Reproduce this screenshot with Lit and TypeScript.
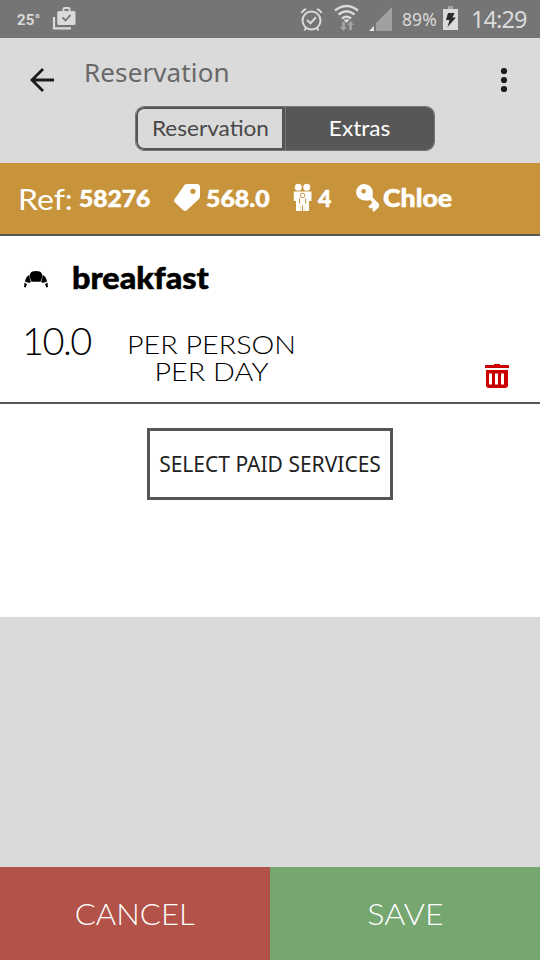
import { LitElement, html, css } from "lit";
import { customElement } from "lit/decorators.js";

@customElement("status-bar")
class StatusBar extends LitElement {
  static styles = css`
    :host { display: flex; height: 38px; background: #757575; color: #dadada; font-family: "Noto Sans", sans-serif; position: relative; white-space: nowrap; }
    svg { display: block; width: 540px; height: 38px; position: absolute; inset: 0; }
    .temp { margin-left: 17px; width: 368px; font: 700 15px/38px Roboto, sans-serif; letter-spacing: 0.2px; padding-top: 1px; box-sizing: border-box; }
    .charge { margin-left: 17px; width: 69px; font-size: 17.5px; line-height: 39px; letter-spacing: 0.1px; }
    .time { font-size: 23.5px; line-height: 38px; letter-spacing: -0.9px; }
  `;
  render() {
    return html`
      <span class="temp">25°</span><span class="charge">89%</span><span class="time">14:29</span>
      <svg viewBox="0 0 540 38">
        <path d="M54 17v11.300H71" fill="none" stroke="#dadada" stroke-width="2.200"/>
        <path d="M59 11h3.500V9q0-2 2-2h4q2 0 2 2v2H74q1.500 0 1.500 1.500v11Q75.500 25 74 25H59q-1.700 0-1.700-1.500v-11Q57.300 11 59 11zm5.500 0h4V9h-4z" fill="#dadada" fill-rule="evenodd"/>
        <path d="M62.500 17.500l3 3 5-5.500" fill="none" stroke="#757575" stroke-width="1.800"/>
        <g fill="none" stroke="#dadada" stroke-width="2">
          <circle cx="311.500" cy="20.500" r="9"/>
          <path d="M307 20l3.500 3.300 5.500-6M301.500 13q1.500-3 4.500-4M317 9q3 1 4.500 4M306 28l-1.500 2.500M317 28l1.500 2.500"/>
          <path d="M335 10.500q11.500-9 23 0M338.500 14.500q8-6.500 16 0M342 18.500q4.500-3.500 9 0" stroke-width="2.500"/>
        </g>
        <path d="M343.500 20q3-1.500 6 0l-3 3z" fill="#dadada"/>
        <path d="M342 22h3v5h2l-3.500 4-3.500-4h2zM349 30h3v-5h2l-3.500-4-3.500 4h2z" fill="#a3a3a3"/>
        <path d="M376 23V31h16V7z" fill="#a0a0a0"/><path d="M369 31l5-5v5z" fill="#e8e8e8"/>
        <path d="M448 6h5v3h-5z" fill="#a3a3a3"/><path d="M443 9h15v21h-15z" fill="#dadada"/>
        <path d="M448 13h6.500l-2 4.500h3.500L447.500 27l2-7h-3.500z" fill="#2b2b2b"/>
      </svg>`;
  }
}

@customElement("app-root")
class AppRoot extends LitElement {
  static styles = css`
    * { box-sizing: border-box; }
    :host { display: flex; flex-direction: column; width: 540px; height: 960px; overflow: hidden; background: #dadada; font-family: Lato, sans-serif; white-space: nowrap; }
    svg { display: block; flex: none; }
    header { height: 125px; flex: none; }
    .top { display: flex; height: 68px; }
    .back { margin: 29px 0 0 29px; }
    .title { margin-left: 29px; width: 413px; font: 400 26px/68px "Noto Sans", sans-serif; letter-spacing: 0.12px; color: #686868; }
    .more { margin-top: 29px; }
    .tabs { display: flex; width: 300px; height: 45px; margin-left: 135px; border-radius: 9px; overflow: hidden; border: 1px solid #777; color: #484848; font-size: 21px; text-align: center; }
    .tab { width: 149px; border: 2px solid #555; border-radius: 8px 0 0 8px; border-right-width: 3px; line-height: 38px; }
    .tab.on { width: 149px; background: #575757; color: #fff; border: 0; border-left: 1px solid #777; border-radius: 0; line-height: 42px; }
    .wide { display: inline-block; transform: scaleX(1.075); }
    .summary { display: flex; flex: none; height: 73px; background: #c7933b; border-bottom: 2px solid #555; color: #fff; font: 900 23px/70px Lato, sans-serif; }
    .ref { margin-left: 18px; width: 61px; font-size: 29px; font-weight: 400; line-height: 71px; }
    .ref, .num, .price, .guests, .name, .breakfast { transform-origin: left; }
    .ref { transform: scaleX(1.1); }
    .num, .price, .guests, .name, .breakfast { -webkit-text-stroke: 0.5px currentColor; }
    .num { width: 94px; transform: scaleX(1.07); }
    .price { width: 87px; margin-left: 5px; transform: scaleX(1.08); }
    .guests { width: 38px; margin-left: 5px; }
    .name { margin-left: 4px; font-size: 24px; transform: scaleX(1.11); }
    .summary svg { margin-top: 20px; }
    main { height: 381px; flex: none; background: #fff; color: #000; }
    .service { height: 168px; border-bottom: 2px solid #555; }
    .line { display: flex; height: 84px; }
    .croissant { margin: 34px 0 0 23px; }
    .breakfast { margin-left: 23px; font-size: 30px; font-weight: 900; line-height: 82px; transform: scaleX(1.08); }
    .details { display: flex; height: 82px; font-weight: 300; }
    .amount { margin-left: 22px; width: 91px; font-size: 38px; line-height: 40px; letter-spacing: -1.6px; }
    .basis { width: 197px; text-align: center; font-size: 26px; line-height: 27px; padding-top: 11px; transform: scaleX(1.105); }
    .trash { margin: 43px 0 0 174px; }
    .select { display: block; width: 246px; height: 72px; margin: 24px auto 0; padding: 0; background: #fff; border: 3px solid #555; color: #222; font: 400 21px/67px "Noto Sans", sans-serif; text-align: center; }
    footer { display: flex; height: 93px; margin-top: auto; color: #fff; font-weight: 300; font-size: 30px; line-height: 92px; text-align: center; }
    .cancel { width: 270px; background: #b25248; }
    .save { width: 270px; background: #76a771; }
    .cancel .wide { transform: scaleX(1.04); }
  `;
  render() {
    return html`
      <status-bar></status-bar>
      <header>
        <div class="top">
          <svg class="back" width="26" height="26"><path d="M14 2L3 13l11 11M3 13h22" fill="none" stroke="#1b1b1b" stroke-width="2.800"/></svg>
          <span class="title">Reservation</span>
          <svg class="more" width="14" height="26" fill="#1b1b1b"><circle cx="7" cy="4" r="3.100"/><circle cx="7" cy="13" r="3.100"/><circle cx="7" cy="22" r="3.100"/></svg>
        </div>
        <div class="tabs"><span class="tab"><span class="wide">Reservation</span></span><span class="tab on"><span class="wide">Extras</span></span></div>
      </header>
      <section class="summary">
        <span class="ref">Ref:</span><span class="num">58276</span>
        <svg width="28" height="32"><path d="M14 1h10q3 0 3 3v9q0 2-1.500 3.500L14 27q-2 2-4 0L2 19.500q-2-2 0-4L11.500 2Q12.500 1 14 1zm6 4.700a2.600 2.600 0 1 0 0 5.200 2.600 2.600 0 0 0 0-5.200z" fill="#fff" fill-rule="evenodd"/></svg>
        <span class="price">568.0</span>
        <svg width="20" height="32" fill="#fff"><circle cx="5.300" cy="4.300" r="3.500"/><circle cx="13.700" cy="4.300" r="3.500"/><path d="M.800 8.500H18.500V18H16v10h-4.500v-5.500h-4V28H3V18H.800z"/><circle cx="9.600" cy="12.500" r="2.300" stroke="#c7933b" stroke-width="1"/><path d="M6.500 15.500v5M12.700 15.500v5M9.600 22.500V28" fill="none" stroke="#c7933b" stroke-width="1"/><path d="M7.500 22h1.600v6H7.500zM10.100 22h1.600v6h-1.600z"/></svg>
        <span class="guests">4</span>
        <svg width="23" height="32" fill="#fff"><path fill-rule="evenodd" d="M8.500 1a8.200 8.200 0 1 0 1 16.300q2 .9 4.500-.3l2.500 2.500-4.300 4.300 2 1.700 2.500-.4-.3 2.700 1.600 1L23 24v-3l-6.500-6.800Q18.500 2 8.500 1zM7.600 6a2.300 2.300 0 1 1 0 4.600 2.300 2.300 0 0 1 0-4.600z"/></svg>
        <span class="name">Chloe</span>
      </section>
      <main>
        <div class="service">
          <div class="line">
            <svg class="croissant" width="26" height="20"><path d="M7.500 3Q8.500 1 13 1t5.500 2l1 3-2 5.800H8.500L6.500 6zM6 5l1.800 7L6 13 2 11.500Q2.500 7 6 5zM20 5l-1.800 7 1.800 1 4-1.500Q23.500 7 20 5zM1.500 12.500L4 14.300 2.700 17.500 1 17zM24.500 12.500L22 14.300l1.300 3.200 1.700-.5z"/></svg>
            <span class="breakfast">breakfast</span>
          </div>
          <div class="details">
            <span class="amount">10.0</span>
            <span class="basis">PER PERSON<br>PER DAY</span>
            <svg class="trash" width="26" height="26"><path fill="#cc0202" fill-rule="evenodd" d="M10 1h6v1h8q1 0 1 1v2H1V3q0-1 1-1h8zM2 7h22v15q0 3-3 3H5q-3 0-3-3zM5 10.500v11h3v-11zm6 0v11h3v-11zm6 0v11h3v-11z"/></svg>
          </div>
        </div>
        <button class="select">SELECT PAID SERVICES</button>
      </main>
      <footer><span class="cancel"><span class="wide">CANCEL</span></span><span class="save"><span class="wide">SAVE</span></span></footer>`;
  }
}
